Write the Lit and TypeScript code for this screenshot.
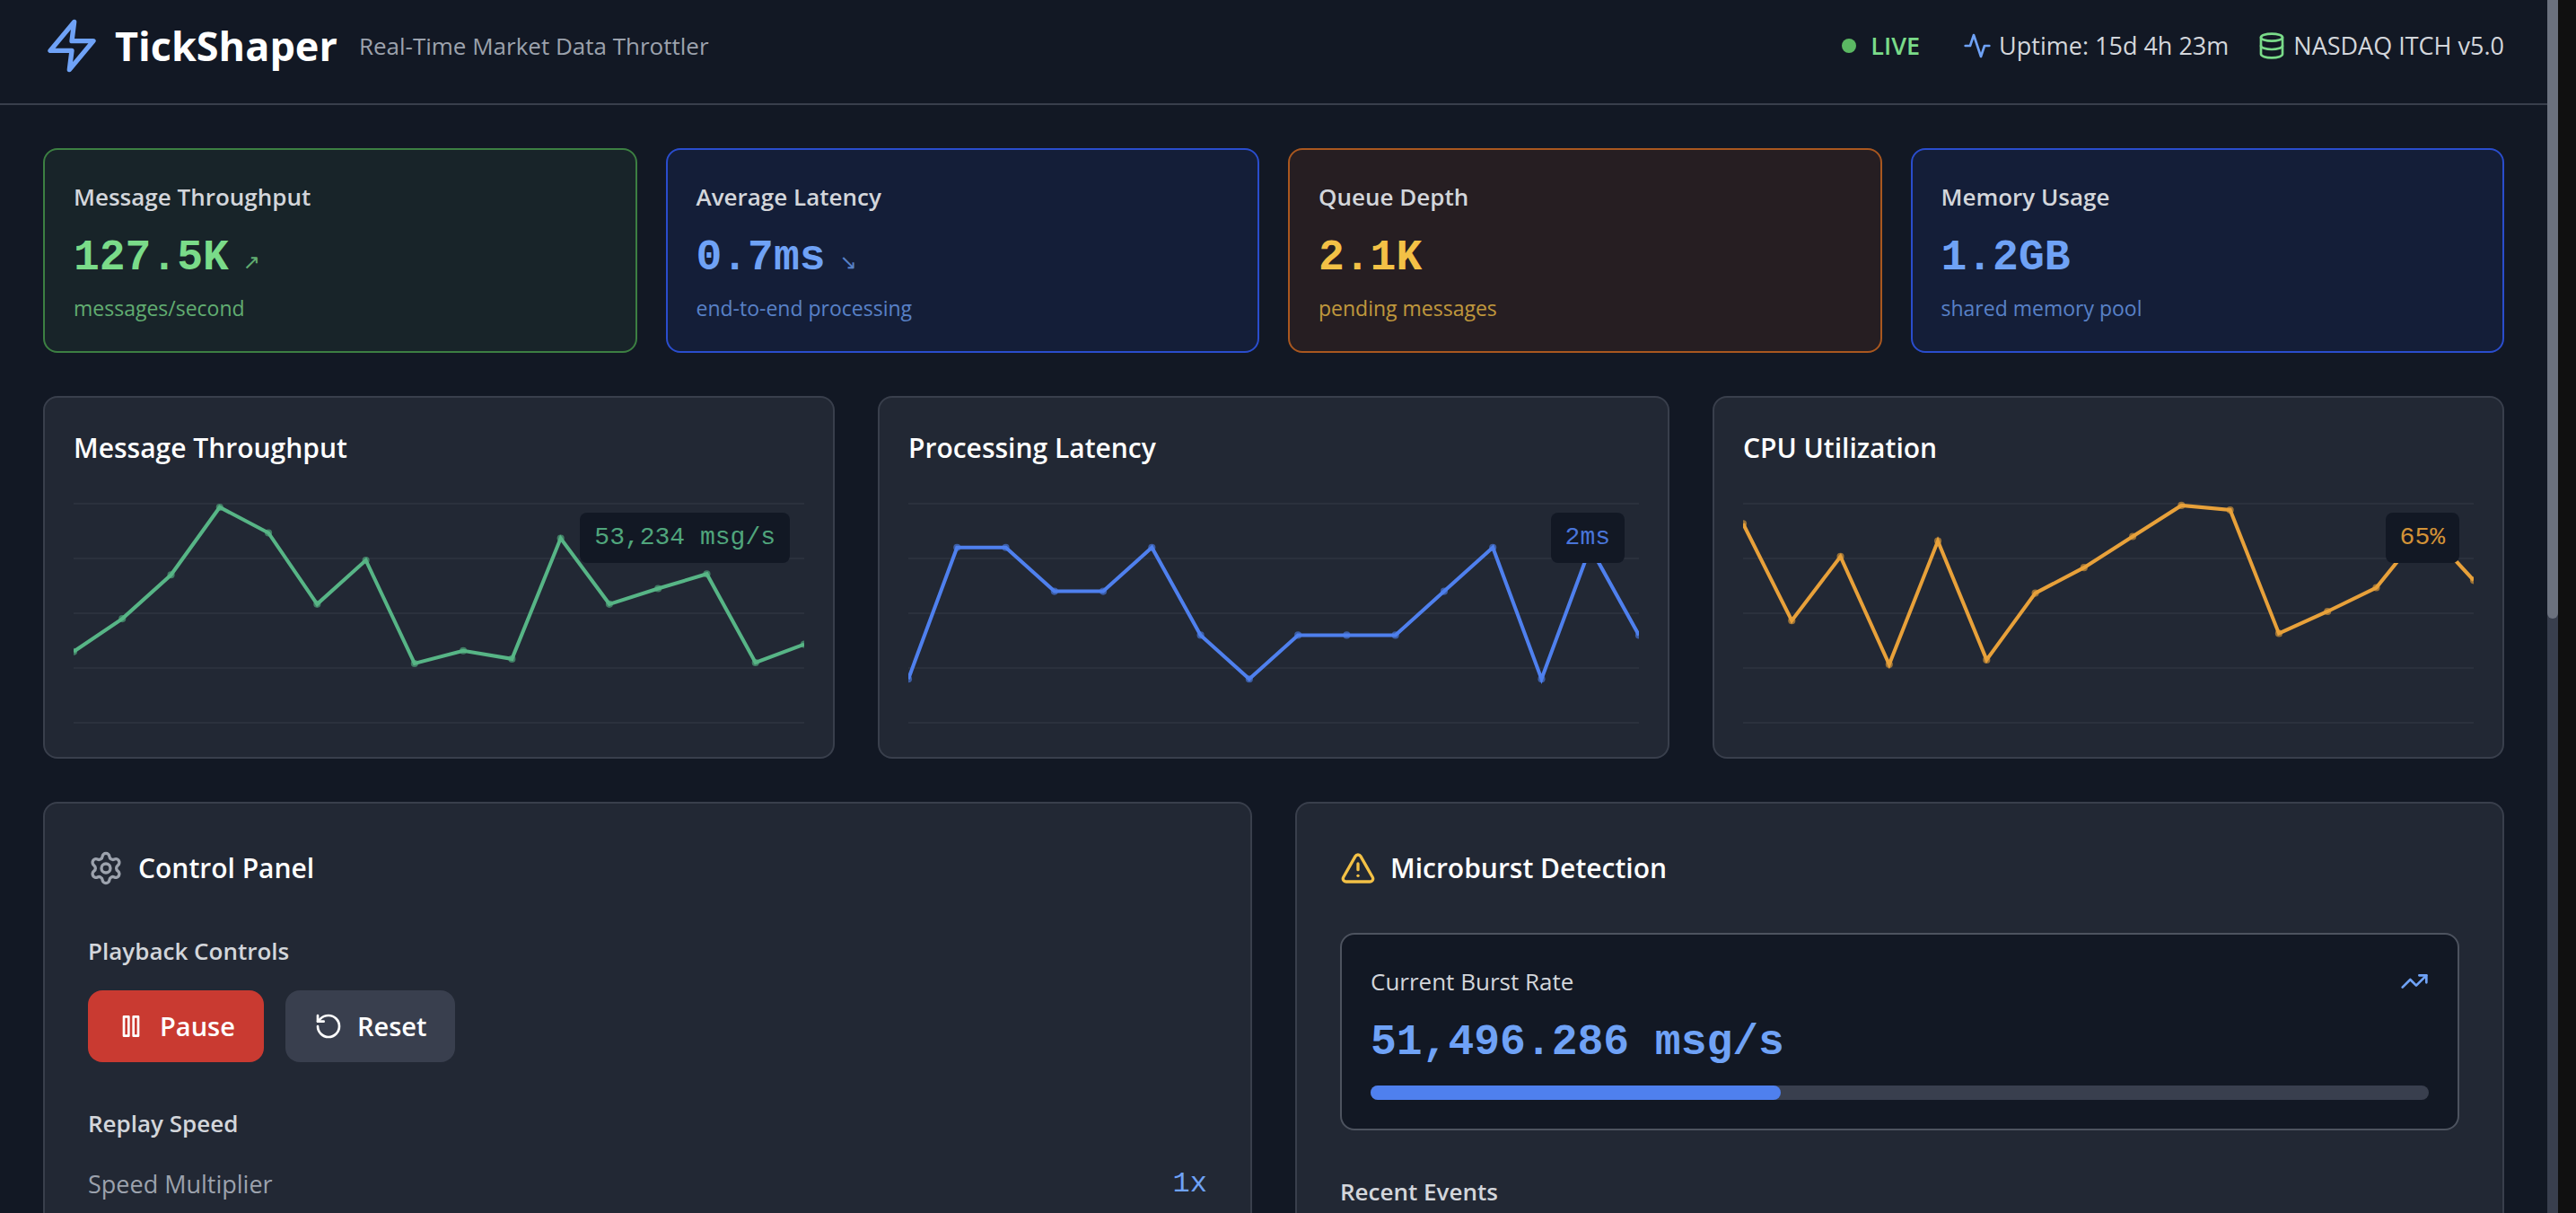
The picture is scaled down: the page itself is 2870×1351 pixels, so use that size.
import { LitElement, html, svg, css } from "lit";
import { customElement, property } from "lit/decorators.js";
import { classMap } from "lit/directives/class-map.js";
import { styleMap } from "lit/directives/style-map.js";

type Tone = "green" | "blue" | "amber";

const ICONS = {
  zap: svg`<polygon points="13 2 3 14 12 14 11 22 21 10 12 10 13 2"/>`,
  activity: svg`<polyline points="22 12 18 12 15 21 9 3 6 12 2 12"/>`,
  database: svg`<ellipse cx="12" cy="5" rx="9" ry="3"/><path d="M3 5V19A9 3 0 0 0 21 19V5"/><path d="M3 12A9 3 0 0 0 21 12"/>`,
  settings: svg`<path d="M9.671 4.136a2.34 2.34 0 0 1 4.659 0 2.34 2.34 0 0 0 3.319 1.915 2.34 2.34 0 0 1 2.33 4.033 2.34 2.34 0 0 0 0 3.831 2.34 2.34 0 0 1-2.33 4.033 2.34 2.34 0 0 0-3.319 1.915 2.34 2.34 0 0 1-4.659 0 2.34 2.34 0 0 0-3.32-1.915 2.34 2.34 0 0 1-2.33-4.033 2.34 2.34 0 0 0 0-3.831A2.34 2.34 0 0 1 6.35 6.051a2.34 2.34 0 0 0 3.319-1.915"/><circle cx="12" cy="12" r="3"/>`,
  pause: svg`<rect x="6" y="4" width="4" height="16"/><rect x="14" y="4" width="4" height="16"/>`,
  reset: svg`<path d="M3 12a9 9 0 1 0 9-9 9.75 9.75 0 0 0-6.74 2.74L3 8"/><path d="M3 3v5h5"/>`,
  alert: svg`<path d="m21.73 18-8-14a2 2 0 0 0-3.48 0l-8 14A2 2 0 0 0 4 21h16a2 2 0 0 0 1.73-3Z"/><path d="M12 9v4"/><path d="M12 17h.01"/>`,
  trend: svg`<polyline points="22 7 13.5 15.5 8.5 10.5 2 17"/><polyline points="16 7 22 7 22 13"/>`,
};

@customElement("line-icon")
class LineIcon extends LitElement {
  @property() name: keyof typeof ICONS = "zap";

  static styles = css`
    :host { display: block; width: 32px; height: 32px; flex: none; }
    .icon {
      display: block; width: 100%; height: 100%; fill: none; stroke: currentColor;
      stroke-width: 2; stroke-linecap: round; stroke-linejoin: round;
    }
  `;

  render() {
    return html`<svg class="icon" viewBox="0 0 24 24" aria-hidden="true">${ICONS[this.name]}</svg>`;
  }
}

@customElement("stat-card")
class StatCard extends LitElement {
  @property() label = "";
  @property() value = "";
  @property() trend = "";
  @property() note = "";
  @property() tone: Tone = "blue";

  static styles = css`
    :host { display: block; min-width: 0; }
    .card { box-sizing: border-box; padding: 32px; border: 2px solid; border-radius: 16px; }
    .green { border-color: #3c7f42; background: #182429; color: #7adb89; }
    .blue { border-color: #2a4dcd; background: #141e38; color: #6fa2f6; }
    .amber { border-color: #a9571f; background: #261e22; color: #f3c146; }
    .label { margin: 0 0 16px; font-size: 26px; line-height: 40px; font-weight: 600; color: #d3d6db; }
    .reading { display: flex; align-items: baseline; gap: 16px; }
    .value { font: 700 48px/64px "Liberation Mono", monospace; }
    .trend { font-family: "DejaVu Sans", sans-serif; font-size: 23px; line-height: 32px; opacity: 0.75; }
    .note { margin: 8px 0 0; font-size: 23px; line-height: 32px; opacity: 0.75; }
  `;

  render() {
    return html`
      <section class=${classMap({ card: true, [this.tone]: true })}>
        <h3 class="label">${this.label}</h3>
        <div class="reading">
          <span class="value">${this.value}</span>
          ${this.trend ? html`<span class="trend">${this.trend}</span>` : null}
        </div>
        <p class="note">${this.note}</p>
      </section>
    `;
  }
}

@customElement("trend-chart")
class TrendChart extends LitElement {
  @property() heading = "";
  @property() reading = "";
  @property() tone: Tone = "blue";
  @property({ attribute: false }) values: number[] = [];

  static styles = css`
    :host { display: block; min-width: 0; }
    .card { padding: 32px; border: 2px solid #393f4c; border-radius: 16px; background: #222834; }
    .heading { margin: 0 0 32px; font-size: 30px; line-height: 48px; font-weight: 600; color: #ffffff; }
    .plot { position: relative; height: 256px; }
    .graph { display: block; width: 100%; height: 100%; }
    .grid { stroke: #393f4c; stroke-width: 1; opacity: 0.4; }
    .line { fill: none; stroke: currentColor; stroke-width: 2; }
    .dot { fill: currentColor; opacity: 0.6; }
    .green { color: #57b586; }
    .blue { color: #4f80ee; }
    .amber { color: #e8a13a; }
    .badge {
      position: absolute; top: 16px; right: 16px; padding: 8px 16px; border-radius: 8px;
      background: #121824; font: 28px/40px "Liberation Mono", monospace;
    }
    .badge-text { opacity: 0.9; }
  `;

  render() {
    const step = 400 / (this.values.length - 1);
    const points = this.values.map((v, i) => [i * step, v]);
    return html`
      <section class="card">
        <h3 class="heading">${this.heading}</h3>
        <div class=${classMap({ plot: true, [this.tone]: true })}>
          <svg class="graph" viewBox="0 0 400 120" role="img" aria-label=${this.heading}>
            ${[0, 30, 60, 90, 120].map((y) => svg`<line class="grid" x1="0" x2="400" y1=${y} y2=${y}/>`)}
            <polyline class="line" points=${points.map((p) => p.join(",")).join(" ")}></polyline>
            ${points.map(([x, y]) => svg`<circle class="dot" cx=${x} cy=${y} r="2"/>`)}
          </svg>
          <div class="badge"><span class="badge-text">${this.reading}</span></div>
        </div>
      </section>
    `;
  }
}

@customElement("app-root")
class AppRoot extends LitElement {
  private stats = [
    { label: "Message Throughput", value: "127.5K", trend: "↗", note: "messages/second", tone: "green" },
    { label: "Average Latency", value: "0.7ms", trend: "↘", note: "end-to-end processing", tone: "blue" },
    { label: "Queue Depth", value: "2.1K", trend: "", note: "pending messages", tone: "amber" },
    { label: "Memory Usage", value: "1.2GB", trend: "", note: "shared memory pool", tone: "blue" },
  ];

  private charts = [
    {
      heading: "Message Throughput", reading: "53,234 msg/s", tone: "green",
      values: [81, 63, 39, 2, 16, 55, 31, 87.5, 80.5, 85, 19, 55, 46.5, 38.5, 87, 77],
    },
    {
      heading: "Processing Latency", reading: "2ms", tone: "blue",
      values: [96, 24, 24, 48, 48, 24, 72, 96, 72, 72, 72, 48, 24, 96, 24, 72],
    },
    {
      heading: "CPU Utilization", reading: "65%", tone: "amber",
      values: [11, 64, 29, 88, 20.5, 85.5, 49, 35, 18, 1, 3.5, 71, 59, 46, 13, 42],
    },
  ];

  private burstShare = 38.8;

  static styles = css`
    :host {
      display: flex; height: 100vh; overflow: hidden; background: #101010; color: #d3d6db;
      font-family: "Open Sans", "Noto Sans", sans-serif; font-size: 26px; line-height: 40px;
    }
    .page { flex: 1; min-width: 0; background: #121824; }
    .scrollbar { flex: none; width: 12px; margin-right: 20px; background: #393f4e; }
    .thumb { height: 51%; border-radius: 0 0 6px 6px; background: #6b717e; }
    .header {
      display: flex; justify-content: space-between; align-items: center; gap: 48px;
      padding: 19px 48px 32px; border-bottom: 2px solid #393f4c;
    }
    .brand { display: flex; align-items: center; gap: 16px; }
    .logo { width: 64px; height: 64px; color: #6fa2f6; }
    .name { margin: 0; font-size: 45px; line-height: 64px; font-weight: 700; color: #ffffff; }
    .tagline { margin-left: 8px; color: #9ca2ad; }
    .status { display: flex; align-items: center; gap: 32px; font-size: 27px; }
    .live { display: flex; align-items: center; gap: 16px; margin-right: 16px; font-weight: 600; color: #7adb89; }
    .pulse { width: 16px; height: 16px; border-radius: 50%; background: #5bb863; }
    .fact { display: flex; align-items: center; gap: 8px; }
    .tint-blue { color: #6fa2f6; }
    .tint-green { color: #7adb89; }
    .main { display: flex; flex-direction: column; gap: 48px; padding: 48px; }
    .stats { display: grid; grid-template-columns: repeat(4, 1fr); gap: 32px; }
    .charts { display: grid; grid-template-columns: repeat(3, 1fr); gap: 48px; }
    .panels { display: grid; grid-template-columns: repeat(2, 1fr); gap: 48px; }
    .panel { padding: 48px; border: 2px solid #393f4c; border-radius: 16px; background: #222834; }
    .title { display: flex; align-items: center; gap: 16px; margin: 0 0 48px; font-size: 30px; line-height: 48px; font-weight: 600; color: #ffffff; }
    .title-icon { width: 40px; height: 40px; }
    .tint-gray { color: #9ca2ad; }
    .tint-amber { color: #f3c146; }
    .group { margin: 0 0 24px; font-size: 26px; line-height: 40px; font-weight: 600; color: #d3d6db; }
    .buttons { display: flex; gap: 24px; margin-bottom: 48px; }
    .button {
      display: flex; align-items: center; gap: 16px; padding: 16px 32px; border: 0; border-radius: 16px;
      font: inherit; font-size: 29px; line-height: 48px; font-weight: 600; color: #ffffff;
    }
    .danger { background: #c93a31; }
    .neutral { background: #393f4e; }
    .setting { display: flex; justify-content: space-between; align-items: center; font-size: 27px; color: #9ca2ad; }
    .amount { font: 32px/48px "Liberation Mono", monospace; color: #6fa2f6; }
    .burst { margin-bottom: 48px; padding: 32px; border: 2px solid #4d535f; border-radius: 16px; background: #121824; }
    .burst-head { display: flex; justify-content: space-between; align-items: center; }
    .rate { margin: 16px 0; font: 700 48px/64px "Liberation Mono", monospace; color: #6fa2f6; }
    .track { height: 16px; border-radius: 8px; background: #393f4e; }
    .fill { height: 100%; border-radius: 8px; background: #4f80ee; }
  `;

  render() {
    return html`
      <div class="page">
        <header class="header">
          <div class="brand">
            <line-icon class="logo" name="zap"></line-icon>
            <h1 class="name">TickShaper</h1>
            <span class="tagline">Real-Time Market Data Throttler</span>
          </div>
          <div class="status">
            <span class="live"><span class="pulse"></span>LIVE</span>
            <span class="fact"><line-icon class="tint-blue" name="activity"></line-icon>Uptime: 15d 4h 23m</span>
            <span class="fact"><line-icon class="tint-green" name="database"></line-icon>NASDAQ ITCH v5.0</span>
          </div>
        </header>
        <main class="main">
          <div class="stats">
            ${this.stats.map((s) => html`
              <stat-card .label=${s.label} .value=${s.value} .trend=${s.trend} .note=${s.note} .tone=${s.tone as Tone}></stat-card>
            `)}
          </div>
          <div class="charts">
            ${this.charts.map((c) => html`
              <trend-chart .heading=${c.heading} .reading=${c.reading} .tone=${c.tone as Tone} .values=${c.values}></trend-chart>
            `)}
          </div>
          <div class="panels">
            <section class="panel">
              <h2 class="title"><line-icon class="title-icon tint-gray" name="settings"></line-icon>Control Panel</h2>
              <h3 class="group">Playback Controls</h3>
              <div class="buttons">
                <button class="button danger" type="button"><line-icon name="pause"></line-icon>Pause</button>
                <button class="button neutral" type="button"><line-icon name="reset"></line-icon>Reset</button>
              </div>
              <h3 class="group">Replay Speed</h3>
              <div class="setting"><span>Speed Multiplier</span><span class="amount">1x</span></div>
            </section>
            <section class="panel">
              <h2 class="title"><line-icon class="title-icon tint-amber" name="alert"></line-icon>Microburst Detection</h2>
              <div class="burst">
                <div class="burst-head">
                  <span>Current Burst Rate</span>
                  <line-icon class="tint-blue" name="trend"></line-icon>
                </div>
                <p class="rate">51,496.286 msg/s</p>
                <div class="track" role="progressbar" aria-label="Current Burst Rate" aria-valuenow=${this.burstShare}>
                  <div class="fill" style=${styleMap({ width: `${this.burstShare}%` })}></div>
                </div>
              </div>
              <h3 class="group">Recent Events</h3>
            </section>
          </div>
        </main>
      </div>
      <div class="scrollbar" aria-hidden="true"><div class="thumb"></div></div>
    `;
  }
}
